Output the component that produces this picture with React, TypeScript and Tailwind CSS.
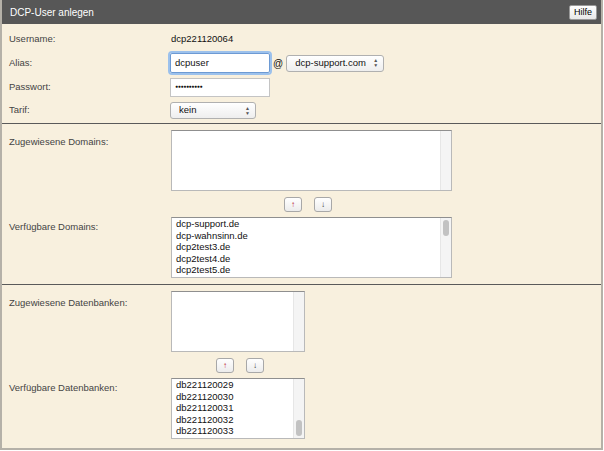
import React from "react";

const font = { fontFamily: '"Liberation Sans", Arial, sans-serif' };

function Listbox({ width, items, thumb }: { width: string; items: string[]; thumb?: "top" | "bottom" }) {
  return (
    <div className={`${width} h-[61px] bg-white border border-[#b9b9b9] border-t-[#8f8f8f] flex overflow-hidden`}>
      <div className="flex-1 pl-[4px] pt-0 text-[9.5px] leading-[11.5px] text-[#111]">
        {items.map((it) => (
          <div key={it}>{it}</div>
        ))}
      </div>
      <div className="w-[11px] bg-[#f4f4f4] border-l border-[#e6e6e6] relative">
        {thumb === "top" && <div className="absolute left-[2px] top-[2px] w-[6px] h-[16px] rounded-full bg-[#c2c2c2]" />}
        {thumb === "bottom" && <div className="absolute left-[2px] bottom-[2px] w-[6px] h-[16px] rounded-full bg-[#c2c2c2]" />}
      </div>
    </div>
  );
}

function ArrowButtons({ className }: { className: string }) {
  return (
    <div className={`flex gap-[12px] ${className}`}>
      <button className="w-[18px] h-[15px] bg-gradient-to-b from-white to-[#ececec] border border-[#a8a8a8] rounded-[3px] text-[8px] leading-none text-[#b23] flex items-center justify-center">
        ↑
      </button>
      <button className="w-[18px] h-[15px] bg-gradient-to-b from-white to-[#ececec] border border-[#a8a8a8] rounded-[3px] text-[8px] leading-none text-[#333] flex items-center justify-center">
        ↓
      </button>
    </div>
  );
}

function SelectBox({ width, value }: { width: string; value: string }) {
  return (
    <div className={`${width} h-[17px] bg-gradient-to-b from-white to-[#eeeeee] border border-[#b0b0b0] rounded-[3px] flex items-center justify-between pl-[8px] pr-[5px] text-[9.5px] text-[#111]`}>
      <span>{value}</span>
      <span className="flex flex-col text-[5px] leading-[5px] text-[#555]">
        <span>▲</span>
        <span>▼</span>
      </span>
    </div>
  );
}

export default function App() {
  return (
    <div style={font} className="w-[604px] h-[451px] bg-white">
      <div className="w-[603px] h-[450px] bg-[#f8f0de] border-l-2 border-r-2 border-b-2 border-[#b5b1a8] flex flex-col">
        {/* header */}
        <div className="h-[24px] bg-[#575757] flex items-center justify-between pl-[8px] pr-[4px] shrink-0">
          <span className="text-white text-[10px]">DCP-User anlegen</span>
          <button className="h-[15px] px-[4px] bg-gradient-to-b from-white to-[#e8e8e8] border border-[#999] rounded-[2px] text-[9px] leading-none text-black">
            Hilfe
          </button>
        </div>

        {/* Stammdaten */}
        <div className="pt-[3px] h-[100px] border-b border-[#5a5a5a] text-[9.5px] text-[#444]">
          <div className="h-[24px] flex items-center">
            <span className="w-[168px] pl-[7px]">Username:</span>
            <span className="text-[#111] pl-[1px]">dcp221120064</span>
          </div>
          <div className="h-[24px] flex items-center">
            <span className="w-[168px] pl-[7px]">Alias:</span>
            <div className="w-[100px] h-[20px] bg-white border border-[#6d9ad3] outline-[2px] outline outline-[#9cc1ec] rounded-[2px] pl-[4px] flex items-center text-[#111]">
              dcpuser
            </div>
            <span className="mx-[3px] text-[#111] text-[10px]">@</span>
            <SelectBox width="w-[98px]" value="dcp-support.com" />
          </div>
          <div className="h-[24px] flex items-center">
            <span className="w-[168px] pl-[7px]">Passwort:</span>
            <div className="w-[100px] h-[19px] bg-white border border-[#c4c4c4] pl-[4px] flex items-center text-[#111] text-[5px] tracking-[-0.3px]">
              ●●●●●●●●●●
            </div>
          </div>
          <div className="h-[23px] flex items-center">
            <span className="w-[168px] pl-[7px]">Tarif:</span>
            <SelectBox width="w-[86px]" value="kein" />
          </div>
        </div>

        {/* Domains */}
        <div className="h-[161px] border-b border-[#5a5a5a] flex pt-[6px] text-[9.5px] text-[#444]">
          <div className="w-[169px] pl-[7px] flex flex-col">
            <span className="pt-[5px]">Zugewiesene Domains:</span>
            <span className="pt-[71px]">Verfügbare Domains:</span>
          </div>
          <div className="flex flex-col">
            <Listbox width="w-[281px]" items={[]} />
            <ArrowButtons className="ml-[113px] mt-[6px] mb-[5px]" />
            <Listbox
              width="w-[281px]"
              items={["dcp-support.de", "dcp-wahnsinn.de", "dcp2test3.de", "dcp2test4.de", "dcp2test5.de"]}
              thumb="top"
            />
          </div>
        </div>

        {/* Datenbanken */}
        <div className="flex-1 flex pt-[6px] text-[9.5px] text-[#444]">
          <div className="w-[169px] pl-[7px] flex flex-col">
            <span className="pt-[5px]">Zugewiesene Datenbanken:</span>
            <span className="pt-[71px]">Verfügbare Datenbanken:</span>
          </div>
          <div className="flex flex-col">
            <Listbox width="w-[134px]" items={[]} />
            <ArrowButtons className="ml-[45px] mt-[6px] mb-[5px]" />
            <Listbox
              width="w-[134px]"
              items={["db221120029", "db221120030", "db221120031", "db221120032", "db221120033"]}
              thumb="bottom"
            />
          </div>
        </div>
      </div>
    </div>
  );
}
